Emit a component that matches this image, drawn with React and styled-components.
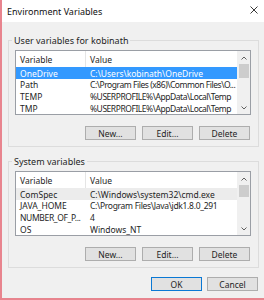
import React from 'react';
import styled, { createGlobalStyle } from 'styled-components';

const GlobalStyle = createGlobalStyle`
  html, body {
    margin: 0;
    padding: 0;
    background: #ffffff;
  }
  body {
    font-family: "Noto Sans", "Open Sans", sans-serif;
    font-size: 9px;
    color: #1e1e1e;
  }
`;

const Window = styled.div`
  width: 264px;
  height: 300px;
  box-sizing: border-box;
  border-left: 2px solid #e8848e;
  border-bottom: 2px solid #e8848e;
  background: #f0f0f0;
  display: flex;
  flex-direction: column;
  overflow: hidden;
`;

const TitleBar = styled.div`
  height: 22px;
  background: #ffffff;
  display: flex;
  align-items: center;
  justify-content: space-between;
  padding: 0 6px 0 5px;
  flex-shrink: 0;
`;

const Title = styled.span`
  font-size: 9px;
  color: #111;
`;

const CloseIcon = styled.svg`
  width: 8px;
  height: 8px;
  margin-top: -2px;
`;

const Body = styled.div`
  flex: 1;
  display: flex;
  flex-direction: column;
  padding: 12px 5px 0 6px;
`;

const GroupBox = styled.fieldset`
  margin: 0 0 8px 0;
  border: 1px solid #dcdcdc;
  padding: 3px 7px 6px 6px;
  min-width: 0;
  display: flex;
  flex-direction: column;
  gap: 11px;
`;

const Legend = styled.legend`
  margin-left: -3px;
  padding: 0 2px;
  font-size: 9px;
  color: #1e1e1e;
`;

const ListView = styled.div`
  height: ${p => p.$height}px;
  border: 1px solid #9a9ea5;
  background: #ffffff;
  display: flex;
  box-sizing: border-box;
`;

const Rows = styled.div`
  flex: 1;
  display: flex;
  flex-direction: column;
  min-width: 0;
`;

const Row = styled.div`
  display: grid;
  grid-template-columns: 70px 1fr;
  height: 12px;
  align-items: center;
  font-size: 8.5px;
  background: ${p => (p.$selected ? '#3399ff' : p.$hover ? '#ececec' : 'transparent')};
  color: ${p => (p.$selected ? '#ffffff' : '#1e1e1e')};
`;

const HeaderRow = styled(Row)`
  height: 17px;
`;

const Cell = styled.span`
  padding-left: 4px;
  white-space: nowrap;
  overflow: hidden;
  letter-spacing: ${p => p.$squeeze || 0}px;
`;

const HeaderCell = styled(Cell)`
  height: 100%;
  display: flex;
  align-items: center;
  border-right: ${p => (p.$last ? 'none' : '1px solid #e5e5e5')};
`;

const ScrollBar = styled.div`
  width: 13px;
  background: #f0f0f0;
  display: flex;
  flex-direction: column;
  align-items: center;
  flex-shrink: 0;
`;

const Arrow = styled.div`
  height: 13px;
  width: 13px;
  display: flex;
  align-items: center;
  justify-content: center;
  flex-shrink: 0;
`;

const Track = styled.div`
  flex: 1;
  width: 100%;
  display: flex;
  justify-content: center;
`;

const Thumb = styled.div`
  width: 10px;
  height: ${p => p.$size}px;
  background: #cdcdcd;
`;

const ButtonRow = styled.div`
  display: flex;
  justify-content: flex-end;
  gap: 6px;
  padding-right: 1px;
`;

const Button = styled.button`
  width: 51px;
  height: 14px;
  padding: 0;
  font-family: inherit;
  font-size: 8.5px;
  color: #1e1e1e;
  background: #e1e1e1;
  border: 1px solid ${p => (p.$default ? '#0a78d4' : '#adadad')};
  box-sizing: border-box;
  border-radius: 0;
`;

const DialogButtons = styled.div`
  display: flex;
  justify-content: flex-end;
  gap: 5px;
  margin-top: 1px;
  padding-right: 1px;
`;

const Chevron = ({ up }) => (
  <svg width="6" height="4" viewBox="0 0 6 4">
    <path d={up ? 'M0.5 3.5 L3 1 L5.5 3.5' : 'M0.5 0.5 L3 3 L5.5 0.5'} fill="none" stroke="#606060" strokeWidth="1" />
  </svg>
);

// [name, value, letter-spacing for the name, letter-spacing for the value]
const userVars = [
  ['OneDrive', 'C:\\Users\\kobinath\\OneDrive', 0, 0],
  ['Path', 'C:\\Program Files (x86)\\Common Files\\O...', 0, -0.45],
  ['TEMP', '%USERPROFILE%\\AppData\\Local\\Temp', 0, -0.45],
  ['TMP', '%USERPROFILE%\\AppData\\Local\\Temp', 0, -0.45],
];

const systemVars = [
  ['ComSpec', 'C:\\Windows\\system32\\cmd.exe', 0, 0],
  ['JAVA_HOME', 'C:\\Program Files\\Java\\jdk1.8.0_291', 0, -0.3],
  ['NUMBER_OF_P...', '4', -0.35, 0],
  ['OS', 'Windows_NT', 0, 0],
];

const VarList = ({ items, selected, hover, thumb }) => (
  <ListView $height={65}>
    <Rows>
      <HeaderRow>
        <HeaderCell>Variable</HeaderCell>
        <HeaderCell $last>Value</HeaderCell>
      </HeaderRow>
      {items.map(([name, value, nameSqueeze, valueSqueeze], i) => (
        <Row key={name} $selected={i === selected} $hover={i === hover}>
          <Cell $squeeze={nameSqueeze}>{name}</Cell>
          <Cell $squeeze={valueSqueeze}>{value}</Cell>
        </Row>
      ))}
    </Rows>
    <ScrollBar>
      <Arrow><Chevron up /></Arrow>
      <Track><Thumb $size={thumb} /></Track>
      <Arrow><Chevron /></Arrow>
    </ScrollBar>
  </ListView>
);

const App = () => (
  <>
    <GlobalStyle />
    <Window>
      <TitleBar>
        <Title>Environment Variables</Title>
        <CloseIcon viewBox="0 0 8 8">
          <path d="M0.5 0.5 L7.5 7.5 M7.5 0.5 L0.5 7.5" stroke="#222" strokeWidth="0.9" />
        </CloseIcon>
      </TitleBar>
      <Body>
        <GroupBox>
          <Legend>User variables for kobinath</Legend>
          <VarList items={userVars} selected={0} thumb={14} />
          <ButtonRow>
            <Button>New...</Button>
            <Button>Edit...</Button>
            <Button>Delete</Button>
          </ButtonRow>
        </GroupBox>
        <GroupBox>
          <Legend>System variables</Legend>
          <VarList items={systemVars} hover={0} thumb={12} />
          <ButtonRow>
            <Button>New...</Button>
            <Button>Edit...</Button>
            <Button>Delete</Button>
          </ButtonRow>
        </GroupBox>
        <DialogButtons>
          <Button $default>OK</Button>
          <Button>Cancel</Button>
        </DialogButtons>
      </Body>
    </Window>
  </>
);

export default App;
